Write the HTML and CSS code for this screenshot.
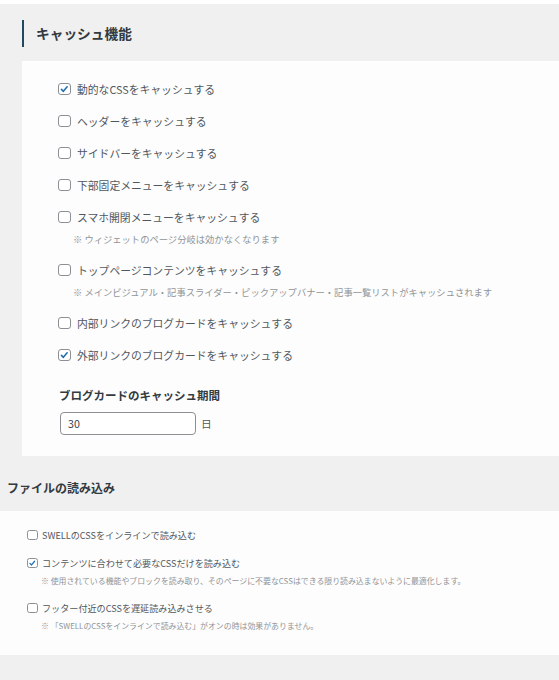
FILE: index.html
```html
<!DOCTYPE html>
<html lang="ja">
<head>
<meta charset="utf-8">
<link rel="stylesheet" href="styles.css">
</head>
<body>
<div class="page">
  <section class="sec1">
    <div class="sec1-head">
      <span class="bar"></span>
      <h2 class="h1">キャッシュ機能</h2>
    </div>
    <div class="card">
      <div class="item"><label class="row"><span class="cb on"><svg viewBox="0 0 12 12"><path d="M2.8 6.2 L5 8.4 L9.3 3.2"/></svg></span>動的なCSSをキャッシュする</label></div>
      <div class="item"><label class="row"><span class="cb"></span>ヘッダーをキャッシュする</label></div>
      <div class="item"><label class="row"><span class="cb"></span>サイドバーをキャッシュする</label></div>
      <div class="item"><label class="row"><span class="cb"></span>下部固定メニューをキャッシュする</label></div>
      <div class="item"><label class="row"><span class="cb"></span>スマホ開閉メニューをキャッシュする</label><p class="note">※ ウィジェットのページ分岐は効かなくなります</p></div>
      <div class="item"><label class="row"><span class="cb"></span>トップページコンテンツをキャッシュする</label><p class="note">※ メインビジュアル・記事スライダー・ピックアップバナー・記事一覧リストがキャッシュされます</p></div>
      <div class="item"><label class="row"><span class="cb"></span>内部リンクのブログカードをキャッシュする</label></div>
      <div class="item"><label class="row"><span class="cb on"><svg viewBox="0 0 12 12"><path d="M2.8 6.2 L5 8.4 L9.3 3.2"/></svg></span>外部リンクのブログカードをキャッシュする</label></div>
      <h3 class="h3">ブログカードのキャッシュ期間</h3>
      <div class="field"><span class="input">30</span><span class="unit">日</span></div>
    </div>
  </section>
  <section class="sec2">
    <div class="sec2-head"><h2 class="h2">ファイルの読み込み</h2></div>
    <div class="body2">
      <div class="item2"><label class="row2"><span class="cb2"></span>SWELLのCSSをインラインで読み込む</label></div>
      <div class="item2"><label class="row2"><span class="cb2 on"><svg viewBox="0 0 12 12"><path d="M2.8 6.2 L5 8.4 L9.3 3.2"/></svg></span>コンテンツに合わせて必要なCSSだけを読み込む</label><p class="note2">※ 使用されている機能やブロックを読み取り、そのページに不要なCSSはできる限り読み込まないように最適化します。</p></div>
      <div class="item2"><label class="row2"><span class="cb2"></span>フッター付近のCSSを遅延読み込みさせる</label><p class="note2">※ 「SWELLのCSSをインラインで読み込む」がオンの時は効果がありません。</p></div>
    </div>
  </section>
  <div class="foot"></div>
</div>
</body>
</html>
```

FILE: styles.css
```css
* { box-sizing: border-box; }
html, body { margin: 0; padding: 0; }
body {
  background: #f0f0f0;
  font-family: "Noto Sans CJK JP", "Noto Sans", sans-serif;
  color: #50575e;
}
.page {
  border-top: 4px solid #ffffff;
  height: 680px;
  overflow: hidden;
}
.sec1 {
  background: #f0f0f0;
  padding-left: 22px;
}
.sec1-head {
  height: 57px;
  display: flex;
  align-items: flex-start;
  padding-top: 16px;
}
.bar {
  width: 2px;
  height: 27px;
  background: #1f4a5f;
  flex: none;
}
.h1 {
  margin: 0 0 0 12px;
  font-size: 13.7px;
  line-height: 27px;
  font-weight: 700;
  color: #333a40;
}
.card {
  background: #fdfdfd;
  padding: 20px 0 23px 36px;
  height: 395px;
  display: flex;
  flex-direction: column;
  align-items: flex-start;
}
.item { margin-bottom: 16px; }
.item:nth-child(8) { margin-bottom: 0; }
.row {
  display: flex;
  align-items: center;
  height: 16px;
  font-size: 10.8px;
  line-height: 16px;
  white-space: nowrap;
}
.cb {
  width: 12.5px;
  height: 12.5px;
  border: 1px solid #8c8f94;
  border-radius: 3px;
  background: #fff;
  margin-right: 6.5px;
  flex: none;
  display: flex;
}
.cb svg, .cb2 svg {
  width: 100%;
  height: 100%;
  fill: none;
  stroke: #2271b1;
  stroke-width: 1.8;
  stroke-linecap: round;
  stroke-linejoin: round;
}
.note {
  margin: 7px 0 0 15px;
  font-size: 9.3px;
  line-height: 14px;
  color: #909498;
  white-space: nowrap;
}
.h3 {
  margin: 23px 0 0 1px;
  font-size: 11.5px;
  line-height: 18px;
  font-weight: 700;
  color: #333a40;
}
.field {
  margin: 8px 0 0 2px;
  display: flex;
  align-items: center;
}
.input {
  width: 136px;
  height: 23px;
  border: 1px solid #8c8f94;
  border-radius: 4px;
  background: #fff;
  font-size: 10.7px;
  line-height: 21px;
  padding-left: 7px;
  color: #3c434a;
}
.unit {
  margin-left: 5px;
  font-size: 10.7px;
}
.sec2-head {
  background: #f0f0f0;
  height: 55px;
  padding: 24px 0 0 7px;
}
.h2 {
  margin: 0;
  font-size: 12px;
  line-height: 16px;
  font-weight: 700;
  color: #333a40;
}
.body2 {
  background: #fdfdfd;
  height: 144px;
  padding: 17px 0 0 27px;
  box-shadow: 0 1px 1px rgba(0, 0, 0, 0.05);
  display: flex;
  flex-direction: column;
  gap: 14px;
}
.row2 {
  display: flex;
  align-items: center;
  height: 14px;
  font-size: 9.1px;
  line-height: 14px;
  white-space: nowrap;
}
.cb2 {
  width: 10.5px;
  height: 10.5px;
  border: 1px solid #8c8f94;
  border-radius: 2.5px;
  background: #fff;
  margin-right: 4.5px;
  flex: none;
  display: flex;
}
.note2 {
  margin: 5px 0 0 14px;
  font-size: 7.9px;
  line-height: 12px;
  color: #909498;
  white-space: nowrap;
}
.foot {
  height: 30px;
  background: #f0f0f0;
}
```
